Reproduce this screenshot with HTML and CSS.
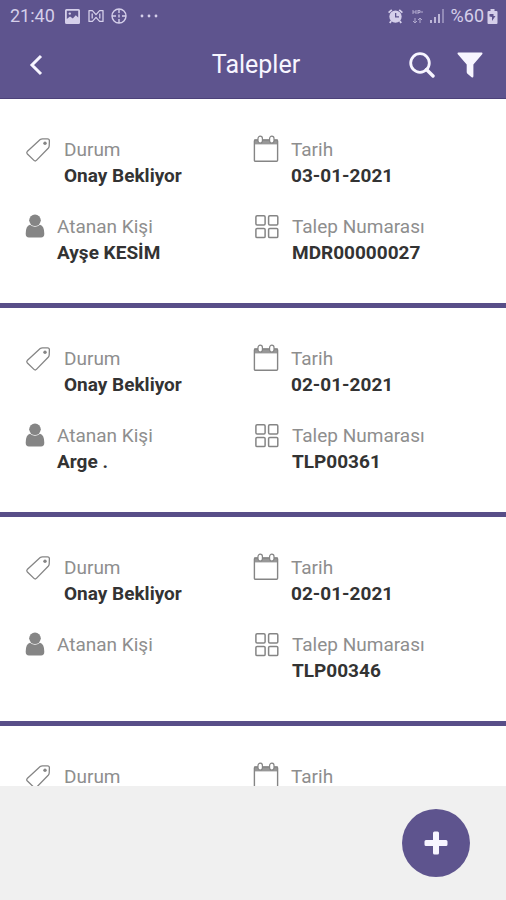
FILE: index.html
```html
<!DOCTYPE html>
<html lang="tr">
<head>
<meta charset="utf-8">
<meta name="viewport" content="width=device-width, initial-scale=1">
<title>Talepler</title>
<link rel="stylesheet" href="styles.css">
</head>
<body>
<svg class="sprite" aria-hidden="true">
  <symbol id="tag" viewBox="0 0 27 28">
    <path d="M2.2 16.6 15.2 4.6Q16.2 3.8 17.5 3.8L22.5 3.8Q24.4 3.8 24.4 5.8L24.2 11Q24.1 12.3 23.2 13.3L11.4 25.4Q10.2 26.6 9 25.4L2.4 19Q1.2 17.7 2.2 16.6Z" fill="none" stroke="currentColor" stroke-width="1.3"/>
    <circle cx="20" cy="8.3" r="1.7" fill="currentColor"/>
  </symbol>
  <symbol id="calendar" viewBox="0 0 26 28">
    <path d="M1 4.5H25V9.4H1Z" fill="currentColor" opacity=".85"/>
    <rect x="1.4" y="5" width="23.2" height="21.3" rx="1" fill="none" stroke="currentColor" stroke-width="1.4"/>
    <rect x="5" y="1.2" width="4.4" height="6.8" rx="2.2" fill="#fff" stroke="currentColor" stroke-width="1.2"/>
    <rect x="16.6" y="1.2" width="4.4" height="6.8" rx="2.2" fill="#fff" stroke="currentColor" stroke-width="1.2"/>
  </symbol>
  <symbol id="person" viewBox="0 0 20 28">
    <circle cx="10" cy="8.3" r="5.8" fill="currentColor"/>
    <path d="M5 12.8Q10 16.6 15 12.8Q19.3 13.8 19.3 21.8Q19.3 25.6 16 25.6H4Q.7 25.6 .7 21.8Q.7 13.8 5 12.8Z" fill="currentColor"/>
  </symbol>
  <symbol id="grid" viewBox="0 0 27 28">
    <g fill="none" stroke="currentColor" stroke-width="1.5">
      <rect x="2.9" y="3.7" width="9.2" height="9.2" rx="1.2"/>
      <rect x="15.6" y="3.7" width="9.2" height="9.2" rx="1.2"/>
      <rect x="2.9" y="16.4" width="9.2" height="9.2" rx="1.2"/>
      <rect x="15.6" y="16.4" width="9.2" height="9.2" rx="1.2"/>
    </g>
  </symbol>
</svg>

<header class="header">
  <div class="status">
    <span class="status-text">21:40</span>
    <svg class="picture" width="15" height="15" viewBox="0 0 15 15" aria-hidden="true">
      <path fill-rule="evenodd" fill="currentColor" d="M1.5 0H13.5Q15 0 15 1.5V13.5Q15 15 13.5 15H1.5Q0 15 0 13.5V1.5Q0 0 1.5 0ZM1.8 1.8V10L5 7.4 7.8 9.6 10.8 6.2 13.2 8.5V1.8Z"/>
      <circle cx="4.8" cy="4.6" r="1.2" fill="currentColor"/>
    </svg>
    <svg class="wave" width="16" height="14" viewBox="0 0 16 14" fill="none" stroke="currentColor" stroke-width="1.3" stroke-linejoin="round" aria-hidden="true">
      <path d="M1 1.6H4.4L8 5.6 11.6 1.6H15V12.4H11.6L8 8.4 4.4 12.4H1ZM4.2 4.4V9.6M11.8 4.4V9.6"/>
    </svg>
    <svg class="target" width="16" height="16" viewBox="0 0 16 16" fill="none" stroke="currentColor" stroke-width="1.4" aria-hidden="true">
      <circle cx="8" cy="8" r="7"/>
      <path d="M8 1V5M8 11V15M1 8H5M11 8H15M8 6.5V9.5"/>
    </svg>
    <svg class="more" width="18" height="4" viewBox="0 0 18 4" fill="currentColor" aria-hidden="true">
      <circle cx="2" cy="2" r="1.4"/><circle cx="9" cy="2" r="1.4"/><circle cx="16" cy="2" r="1.4"/>
    </svg>
    <svg class="alarm" width="15" height="15" viewBox="0 0 15 15" aria-hidden="true">
      <path d="M.6 3.6 3.8.9M14.4 3.6 11.2.9M3.2 12 1.8 14M11.8 12 13.2 14" stroke="currentColor" stroke-width="1.8"/>
      <path fill-rule="evenodd" fill="currentColor" d="M7.5 1.4A6.2 6.2 0 1 1 7.5 13.8A6.2 6.2 0 1 1 7.5 1.4ZM7 4V8.4H11V7.2H8.3V4Z"/>
    </svg>
    <svg class="network" width="11" height="15" viewBox="0 0 11 15" fill="none" stroke="currentColor" aria-hidden="true">
      <path d="M1 1V5M1 3H4M4 1V5M6 1V5M6 1.5H8V3.5H6M8.5 3H11M3 9V14M1 12 3 14 5 12M8 14V9M6 11 8 9 10 11"/>
    </svg>
    <svg class="signal" width="15" height="14" viewBox="0 0 15 14" fill="currentColor" aria-hidden="true">
      <path d="M0 11H2V14H0ZM4 8H6V14H4ZM8 5H10V14H8Z"/><path d="M12 0H14V14H12Z" opacity=".55"/>
    </svg>
    <span class="status-text percent">%60</span>
    <svg class="battery" width="11" height="15" viewBox="0 0 11 15" aria-hidden="true">
      <path fill-rule="evenodd" fill="currentColor" d="M3.5 0H7.5V2H9.5Q10.5 2 10.5 3V14Q10.5 15 9.5 15H1.5Q.5 15 .5 14V3Q.5 2 1.5 2H3.5ZM2.5 5V7.5L5 8V12L8.5 7H6.5V5Z"/>
    </svg>
  </div>
  <nav class="nav">
    <div class="side side-start">
      <button class="icon-button" type="button" aria-label="Geri">
        <svg width="14" height="22" viewBox="0 0 14 22" aria-hidden="true"><path d="M12 2 3 11 12 20" fill="none" stroke="currentColor" stroke-width="3"/></svg>
      </button>
    </div>
    <h1 class="title">Talepler</h1>
    <div class="side side-end">
      <button class="icon-button" type="button" aria-label="Ara">
        <svg width="26" height="26" viewBox="0 0 26 26" fill="none" stroke="currentColor" aria-hidden="true"><circle cx="11" cy="11" r="9.3" stroke-width="2.8"/><path d="M17.5 17.5 24 24" stroke-width="3.4" stroke-linecap="round"/></svg>
      </button>
      <button class="icon-button" type="button" aria-label="Filtrele">
        <svg width="26" height="26" viewBox="0 0 26 26" aria-hidden="true"><path d="M1.4 .5H24.6Q26 .8 25.2 2.2L16.4 12.5V24.2Q16.2 26.2 14.6 25.2L10.2 21.4Q9.7 20.9 9.7 20V12.5L.8 2.2Q0 .8 1.4 .5Z" fill="currentColor"/></svg>
      </button>
    </div>
  </nav>
</header>

<main class="list">
  <dl class="card">
    <div class="field"><svg class="icon wide"><use href="#tag"/></svg><div><dt>Durum</dt><dd>Onay Bekliyor</dd></div></div>
    <div class="field"><svg class="icon"><use href="#calendar"/></svg><div><dt>Tarih</dt><dd>03-01-2021</dd></div></div>
    <div class="field"><svg class="icon narrow"><use href="#person"/></svg><div><dt>Atanan Kişi</dt><dd>Ayşe KESİM</dd></div></div>
    <div class="field"><svg class="icon wide"><use href="#grid"/></svg><div><dt>Talep Numarası</dt><dd>MDR00000027</dd></div></div>
  </dl>
  <dl class="card">
    <div class="field"><svg class="icon wide"><use href="#tag"/></svg><div><dt>Durum</dt><dd>Onay Bekliyor</dd></div></div>
    <div class="field"><svg class="icon"><use href="#calendar"/></svg><div><dt>Tarih</dt><dd>02-01-2021</dd></div></div>
    <div class="field"><svg class="icon narrow"><use href="#person"/></svg><div><dt>Atanan Kişi</dt><dd>Arge .</dd></div></div>
    <div class="field"><svg class="icon wide"><use href="#grid"/></svg><div><dt>Talep Numarası</dt><dd>TLP00361</dd></div></div>
  </dl>
  <dl class="card">
    <div class="field"><svg class="icon wide"><use href="#tag"/></svg><div><dt>Durum</dt><dd>Onay Bekliyor</dd></div></div>
    <div class="field"><svg class="icon"><use href="#calendar"/></svg><div><dt>Tarih</dt><dd>02-01-2021</dd></div></div>
    <div class="field"><svg class="icon narrow"><use href="#person"/></svg><div><dt>Atanan Kişi</dt><dd></dd></div></div>
    <div class="field"><svg class="icon wide"><use href="#grid"/></svg><div><dt>Talep Numarası</dt><dd>TLP00346</dd></div></div>
  </dl>
  <dl class="card">
    <div class="field"><svg class="icon wide"><use href="#tag"/></svg><div><dt>Durum</dt><dd></dd></div></div>
    <div class="field"><svg class="icon"><use href="#calendar"/></svg><div><dt>Tarih</dt><dd></dd></div></div>
  </dl>
</main>

<footer class="footer">
  <button class="add" type="button" aria-label="Yeni talep">
    <svg width="24" height="24" viewBox="0 0 24 24" aria-hidden="true"><path d="M9 2Q9 .5 10.5 .5H13.5Q15 .5 15 2V9H22Q23.5 9 23.5 10.5V13.5Q23.5 15 22 15H15V22Q15 23.5 13.5 23.5H10.5Q9 23.5 9 22V15H2Q.5 15 .5 13.5V10.5Q.5 9 2 9H9Z" fill="currentColor"/></svg>
  </button>
</footer>
</body>
</html>
```
FILE: styles.css
```css
* {
  box-sizing: border-box;
}

body {
  margin: 0;
  height: 100vh;
  display: flex;
  flex-direction: column;
  overflow: hidden;
  background: #fff;
  font-family: Roboto, "Liberation Sans", sans-serif;
}

.sprite {
  display: none;
}

svg {
  display: block;
  flex: none;
}

button {
  display: flex;
  align-items: center;
  justify-content: center;
  padding: 0;
  border: 0;
  color: #f7f5ff;
  cursor: pointer;
}

.header {
  flex: none;
  background: #5e548e;
  border-bottom: 1px solid #4c4179;
}

.status {
  display: flex;
  align-items: center;
  height: 32px;
  padding: 0 8px 0 10px;
  color: #d5cfea;
}

.status-text {
  font-size: 18px;
  line-height: 32px;
}

.picture {
  margin-left: 10px;
}

.wave {
  margin-left: 8px;
}

.target {
  margin-left: 7px;
}

.more {
  margin-left: 13px;
}

.alarm {
  margin-left: auto;
}

.network {
  margin-left: 9px;
  opacity: .7;
}

.signal {
  margin-left: 7px;
  opacity: .8;
}

.percent {
  margin-left: 6px;
}

.battery {
  margin-left: 3px;
}

.nav {
  display: flex;
  align-items: center;
  height: 66px;
  padding: 0 23px;
}

.side {
  flex: 1;
  display: flex;
}

.side-start {
  padding-left: 6px;
}

.side-end {
  justify-content: flex-end;
  gap: 22px;
}

.icon-button {
  background: none;
}

.title {
  margin: 0;
  color: #f7f5ff;
  font-size: 25px;
  line-height: 32px;
  font-weight: 400;
}

.list {
  flex: 1;
  min-height: 0;
  overflow: hidden;
}

.card {
  display: grid;
  grid-template-columns: 1fr 1fr;
  row-gap: 23px;
  margin: 0;
  padding: 36px 0 37px;
  border-bottom: 5px solid #584e88;
}

.field {
  display: flex;
  gap: 12px;
}

.field:nth-child(odd) {
  padding-left: 25px;
}

.icon {
  width: 26px;
  height: 28px;
  color: #858585;
}

.icon.wide {
  width: 27px;
}

.icon.narrow {
  width: 20px;
}

dt,
dd {
  margin: 0;
  min-height: 26px;
  font-size: 19px;
  line-height: 26px;
}

dt {
  margin-top: 2px;
  color: #8e8e8e;
}

dd {
  color: #333;
  font-weight: 700;
}

.footer {
  flex: none;
  display: flex;
  align-items: center;
  justify-content: flex-end;
  height: 114px;
  padding-right: 36px;
  background: #f0f0f0;
}

.add {
  width: 68px;
  height: 68px;
  border-radius: 50%;
  background: #5e548e;
}
```
